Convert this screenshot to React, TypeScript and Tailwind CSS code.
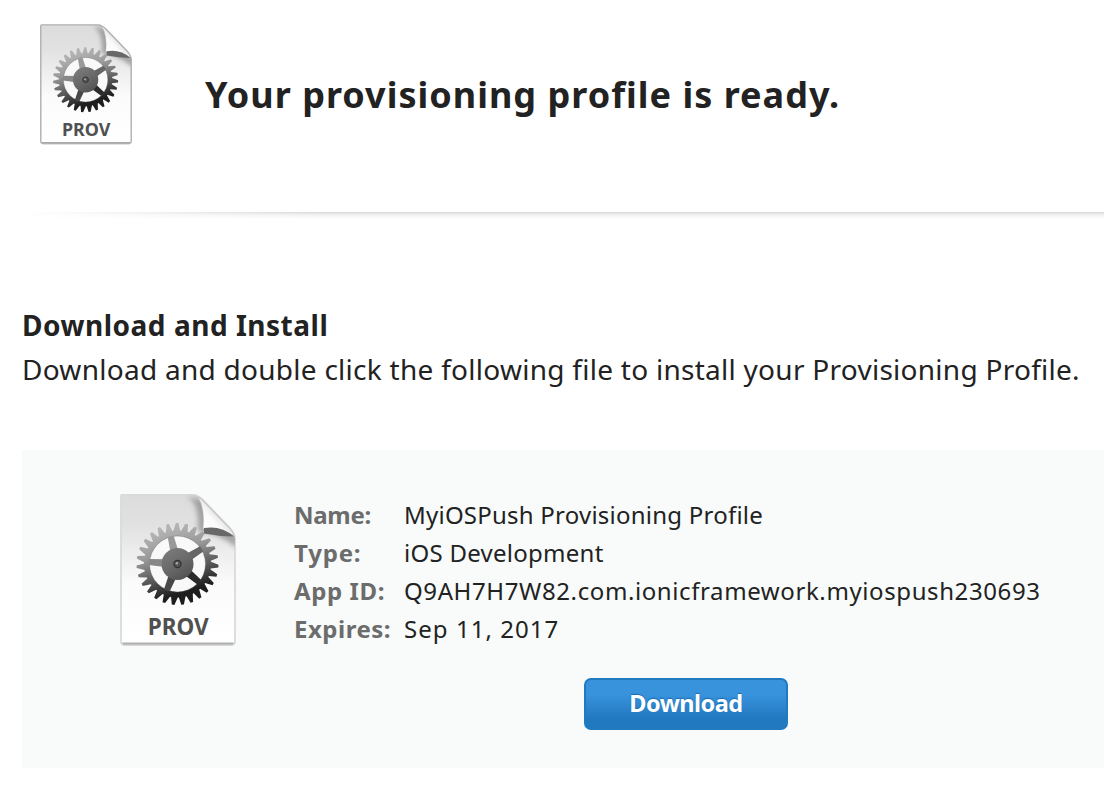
import { useId } from "react";

function gearPath(cx: number, cy: number, teeth: number, outer: number, root: number) {
  const pts: string[] = [];
  const step = (Math.PI * 2) / teeth;
  for (let i = 0; i < teeth; i++) {
    const a = i * step + 0.05;
    const at = (r: number, t: number) =>
      `${(cx + r * Math.cos(t)).toFixed(2)} ${(cy + r * Math.sin(t)).toFixed(2)}`;
    pts.push(at(root, a - step * 0.5), at(outer, a - step * 0.14), at(outer, a + step * 0.14), at(root, a + step * 0.36));
  }
  return `M${pts.join("L")}Z`;
}

const GEAR = gearPath(57.5, 70, 27, 41, 33.5);
const SPOKES = [-104, -32, 40, 112, 184];
const SPOKE_FILLS = ["#999999", "#666666", "#2b2b2b", "#484848", "#888888"];

function ProfileIcon({ className, edge, base }: { className: string; edge: string; base: string }) {
  const id = useId();
  const u = (n: string) => `${id}${n}`;
  return (
    <svg viewBox="0 0 116 152" className={className} aria-hidden="true">
      <defs>
        <linearGradient id={u("page")} x1="0" y1="0" x2="0" y2="1">
          <stop offset="0" stopColor="#dcdcdc" />
          <stop offset="0.2" stopColor="#e1e1e1" />
          <stop offset="0.6" stopColor="#fbfbfb" />
          <stop offset="1" stopColor="#ffffff" />
        </linearGradient>
        <linearGradient id={u("gear")} x1="0.3" y1="0" x2="0.62" y2="1">
          <stop offset="0.08" stopColor="#b4b4b4" />
          <stop offset="0.35" stopColor="#999999" />
          <stop offset="0.6" stopColor="#5c5c5c" />
          <stop offset="0.85" stopColor="#1e1e1e" />
        </linearGradient>
        <linearGradient id={u("hub")} x1="0.2" y1="0" x2="0.8" y2="1">
          <stop offset="0" stopColor="#7c7c7c" />
          <stop offset="0.5" stopColor="#696969" />
          <stop offset="1" stopColor="#505050" />
        </linearGradient>
        <linearGradient id={u("curl")} x1="0.1" y1="0.9" x2="0.6" y2="0.4">
          <stop offset="0" stopColor="#ffffff" />
          <stop offset="0.6" stopColor="#fbfbfb" />
          <stop offset="1" stopColor="#dedede" />
        </linearGradient>
        <filter id={u("soft")} x="-30%" y="-30%" width="160%" height="160%">
          <feGaussianBlur stdDeviation="2.4" />
        </filter>
        <clipPath id={u("clip")}>
          <path d="M2 .5H73Q78 1 83 6L110 34Q115 40 115 45V148Q115 150 113 150H2Q1 150 1 148V2Q1 .5 2 .5Z" />
        </clipPath>
      </defs>
      <path
        d="M2 .8H73Q78 1 83 6L110 34Q115 40 115 45V148Q115 150 113 150H3Q1 150 1 148V2Q1 .8 2 .8Z"
        fill={`url(#${u("page")})`}
        stroke={edge}
        strokeWidth="1.8"
      />
      <path d="M2.5 149.6H113.5" stroke={base} strokeWidth="2.2" />
      <path d="M3 151.4H113" stroke="#d8d8d8" strokeWidth="1.2" />
      <g clipPath={`url(#${u("clip")})`}>
        <path d="M66 2Q80 8 78 38Q98 38 117 54V43L83 6Z" fill="#959595" opacity="0.85" filter={`url(#${u("soft")})`} />
      </g>
      <path d={GEAR} fill={`url(#${u("gear")})`} />
      <circle cx="57.5" cy="70" r="28" fill="#f9f9f9" />
      <circle cx="57.5" cy="70" r="28" fill="none" stroke="#555" strokeOpacity=".35" strokeWidth="1" />
      {SPOKES.map((a, i) => (
        <path key={a} d="M70 66L86 67V73L70 74Z" transform={`rotate(${a} 57.5 70)`} fill={SPOKE_FILLS[i]} />
      ))}
      <circle cx="57.5" cy="70" r="16" fill={`url(#${u("hub")})`} />
      <circle cx="57.5" cy="70" r="3.6" fill="#555" stroke="#333" strokeWidth="1.2" />
      <circle cx="56.8" cy="69.3" r="1.2" fill="#aaa" />
      <path d="M83 35Q85 14 78 3Q80 3.5 83 7L110 35Q113 38 114 42Q101 33 83 35Z" fill={`url(#${u("curl")})`} stroke="#b8b8b8" strokeWidth=".6" />
      <path d="M84 34Q101 31 114 42.5Q99 42.5 84 39.5Z" fill="#686868" />
      <text
        x="58.2"
        y="140.5"
        textAnchor="middle"
        textLength="61"
        lengthAdjust="spacingAndGlyphs"
        fill="#505050"
        className="font-['Noto_Sans',sans-serif] text-[22.5px] font-bold"
      >
        PROV
      </text>
    </svg>
  );
}

const ROWS = [
  { label: "Name:", labelClass: "tracking-[-0.3px]", value: "MyiOSPush Provisioning Profile", valueClass: "tracking-[0.23px]" },
  { label: "Type:", labelClass: "tracking-[0.8px]", value: "iOS Development", valueClass: "tracking-[0.27px]" },
  { label: "App ID:", labelClass: "tracking-[0.6px]", value: "Q9AH7H7W82.com.ionicframework.myiospush230693", valueClass: "tracking-[0.6px]" },
  { label: "Expires:", labelClass: "tracking-[0.5px]", value: "Sep 11, 2017", valueClass: "tracking-[1.05px]" },
];

export default function App() {
  return (
    <main className="h-[794px] w-[1104px] overflow-hidden bg-white font-['Noto_Sans',sans-serif] text-[#222]">
      <header className="flex h-[212px] items-start pt-6 pl-10">
        <ProfileIcon className="h-[121px] w-[92px] shrink-0" edge="#b0b0b0" base="#a8a8a8" />
        <h1 className="mt-[46px] ml-[73px] text-[36px] leading-[50px] font-bold tracking-[1.01px] whitespace-nowrap">
          Your provisioning profile is ready.
        </h1>
      </header>
      <div className="ml-[22px] h-[7px] bg-linear-to-b from-[#d8d8d8] via-[#f1f1f1] via-40% to-white mask-l-from-72% mask-l-to-100%" />
      <section className="mt-[84px] ml-[22px]">
        <h2 className="text-[28px] leading-[44px] font-bold tracking-[0.52px]">Download and Install</h2>
        <p className="text-[28px] leading-[44px] tracking-[0.27px] whitespace-nowrap">
          Download and double click the following file to install your Provisioning Profile.
        </p>
      </section>
      <section className="mt-[59px] ml-[22px] flex h-[318px] bg-[#f8fbfa] pt-11 pl-[98px]">
        <ProfileIcon className="h-[152px] w-[116px] shrink-0" edge="#dadada" base="#b0b0b0" />
        <div className="ml-[58px] flex flex-col">
          <dl className="grid grid-cols-[110px_auto] pt-[2px] text-[24px] leading-[38px] whitespace-nowrap">
            {ROWS.map((row) => (
              <div key={row.label} className="contents">
                <dt className={`font-bold text-[#6c6c6c] ${row.labelClass}`}>{row.label}</dt>
                <dd className={row.valueClass}>{row.value}</dd>
              </div>
            ))}
          </dl>
          <button className="mt-[30px] ml-[290px] flex h-[52px] w-[204px] items-center justify-center rounded-[7px] border-2 border-[#2179c0] bg-linear-to-b from-[#3892dc] from-30% to-[#2179c0] to-80% pb-px text-[23.5px] font-bold tracking-[-0.5px] text-white [text-shadow:0_-1px_1px_#1c6cb0]">
            Download
          </button>
        </div>
      </section>
    </main>
  );
}
